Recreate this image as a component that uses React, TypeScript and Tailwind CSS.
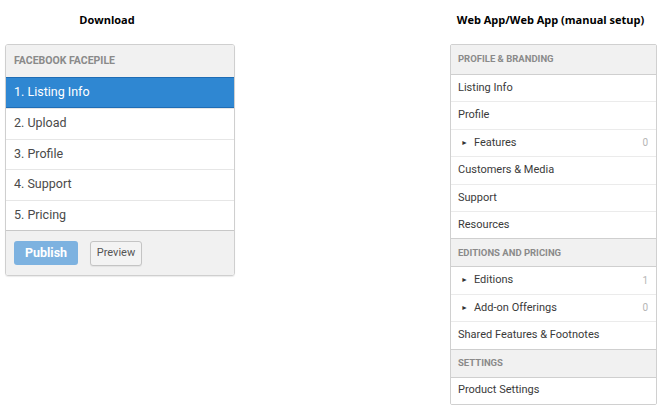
import { Fragment } from 'react';

const font = { fontFamily: 'Roboto, "Liberation Sans", sans-serif' };

const steps = ['1. Listing Info', '2. Upload', '3. Profile', '4. Support', '5. Pricing'];

type Item = { label: string; count?: string; nested?: boolean };
type Section = { title: string; items: Item[] };

const sections: Section[] = [
    {
        title: 'PROFILE & BRANDING',
        items: [
            { label: 'Listing Info' },
            { label: 'Profile' },
            { label: 'Features', count: '0', nested: true },
            { label: 'Customers & Media' },
            { label: 'Support' },
            { label: 'Resources' },
        ],
    },
    {
        title: 'EDITIONS AND PRICING',
        items: [
            { label: 'Editions', count: '1', nested: true },
            { label: 'Add-on Offerings', count: '0', nested: true },
            { label: 'Shared Features & Footnotes' },
        ],
    },
    {
        title: 'SETTINGS',
        items: [{ label: 'Product Settings' }],
    },
];

function Heading({ children, className }: { children: string; className: string }) {
    return (
        <div
            className={`flex h-[44px] items-center justify-center pb-[4px] text-[11px] font-bold text-black ${className}`}
            style={{ fontFamily: '"Open Sans", "DejaVu Sans", sans-serif' }}
        >
            {children}
        </div>
    );
}

function WizardPanel() {
    return (
        <div className="w-[230px] overflow-hidden rounded-[3px] border border-[#cfcfcf] shadow-[0_1px_1px_rgba(0,0,0,0.08)]" style={font}>
            <div className="flex h-[32px] items-center bg-[#f1f1f1] pl-[8px] text-[10.5px] font-bold text-[#8a8a8a]">
                FACEBOOK FACEPILE
            </div>
            {steps.map((step, i) =>
                i === 0 ? (
                    <div
                        key={step}
                        className="flex h-[31px] items-center border-y border-[#1f6db5] bg-[#2f87d2] pl-[8px] text-[12.5px] text-white"
                    >
                        {step}
                    </div>
                ) : (
                    <div
                        key={step}
                        className="flex h-[30.5px] items-center border-t border-[#e6e6e6] bg-white pl-[8px] text-[12.5px] text-[#4a4a4a]"
                    >
                        {step}
                    </div>
                ),
            )}
            <div className="flex h-[45px] items-center gap-[12px] border-t border-[#c8c8c8] bg-[#f1f1f1] pl-[8px]">
                <button className="h-[24px] w-[64px] rounded-[3px] bg-[#7db2e0] text-[12.5px] font-bold text-white">
                    Publish
                </button>
                <button className="h-[25px] w-[52px] rounded-[3px] border border-[#c4c4c4] bg-[#f3f3f3] text-[11px] text-[#555] shadow-[0_1px_1px_rgba(0,0,0,0.06)]">
                    Preview
                </button>
            </div>
        </div>
    );
}

function NavPanel() {
    return (
        <div className="w-[207px] overflow-hidden rounded-[2px] border border-[#d0d0d0]" style={font}>
            {sections.map((section, si) => (
                <Fragment key={section.title}>
                    <div
                        className={`flex items-center bg-[#f1f1f1] pl-[7px] text-[9.5px] font-bold text-[#8a8a8a] ${
                            si === 0 ? 'h-[29px]' : 'h-[28px] border-t border-[#cfcfcf]'
                        }`}
                    >
                        {section.title}
                    </div>
                    {section.items.map((item, ii) => (
                        <div
                            key={item.label}
                            className={`flex h-[27.4px] items-center bg-white pr-[8px] text-[11px] text-[#3a3a3a] ${
                                ii === 0 ? 'border-t border-[#cfcfcf]' : 'border-t border-[#ebebeb]'
                            } ${item.nested ? 'pl-[10px]' : 'pl-[7px]'}`}
                        >
                            {item.nested && <span className="mr-[6px] text-[7px] text-[#333]">►</span>}
                            <span className="flex-1">{item.label}</span>
                            {item.count && <span className="text-[10px] text-[#b5b5b5]">{item.count}</span>}
                        </div>
                    ))}
                </Fragment>
            ))}
        </div>
    );
}

export default function App() {
    return (
        <div className="flex h-[407px] w-[659px] items-start bg-white pl-[5px]">
            <div className="flex w-[230px] flex-col">
                <Heading className="pr-[26px]">Download</Heading>
                <WizardPanel />
            </div>
            <div className="ml-[215px] flex w-[207px] flex-col">
                <Heading className="pr-[6px]">Web App/Web App (manual setup)</Heading>
                <NavPanel />
            </div>
        </div>
    );
}
